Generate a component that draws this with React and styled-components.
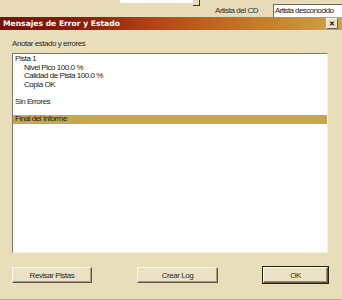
import React from 'react';
import styled, { createGlobalStyle } from 'styled-components';

const GlobalStyle = createGlobalStyle`
  html, body {
    margin: 0;
    padding: 0;
    background: #e8dcb8;
  }
  body {
    font-family: "Liberation Sans", Arial, sans-serif;
    letter-spacing: -0.45px;
    color: #1c1c1c;
    width: 342px;
    height: 300px;
    overflow: hidden;
  }
`;

const lines = [
  { text: 'Pista  1' },
  { text: 'Nivel Pico 100.0 %', indent: true },
  { text: 'Calidad de Pista 100.0 %', indent: true },
  { text: 'Copia OK', indent: true },
  { text: '' },
  { text: 'Sin Errores' },
  { text: '' },
  { text: 'Final del Informe', selected: true }
];

const App = () => (
  <>
    <GlobalStyle />
    <Screen>
      <BackStrip>
        <BackField>
          <DropArrow />
        </BackField>
        <BackLabel>Artista del CD</BackLabel>
        <ArtistField>Artista desconocido</ArtistField>
      </BackStrip>
      <Dialog>
        <TitleBar>
          <Title>Mensajes de Error y Estado</Title>
          <CloseButton>✕</CloseButton>
        </TitleBar>
        <Body>
          <Caption>Anotar estado y errores</Caption>
          <LogBox>
            {lines.map((line, i) => (
              <LogLine key={i} $indent={line.indent} $selected={line.selected}>
                {line.text || '\u00a0'}
              </LogLine>
            ))}
          </LogBox>
          <ButtonRow>
            <Button $width={80}>Revisar Pistas</Button>
            <Button $width={81}>Crear Log</Button>
            <Button $width={65} $default>OK</Button>
          </ButtonRow>
        </Body>
      </Dialog>
    </Screen>
  </>
);

export default App;

const Screen = styled.div`
  width: 342px;
  height: 300px;
  display: flex;
  flex-direction: column;
`;

const BackStrip = styled.div`
  height: 17px;
  display: flex;
  align-items: flex-start;
`;

const BackField = styled.div`
  margin-left: 120px;
  width: 74px;
  height: 3px;
  background: #ffffff;
  position: relative;
`;

const DropArrow = styled.div`
  position: absolute;
  right: -6px;
  top: 0;
  width: 6px;
  height: 5px;
  background: #e8dcb8;
  border-right: 1px solid #3a3528;
  border-bottom: 1px solid #3a3528;
`;

const BackLabel = styled.div`
  width: 58px;
  margin-left: 21px;
  margin-top: 6px;
  font-size: 8px;
  line-height: 10px;
  color: #2a2a2a;
  white-space: nowrap;
`;

const ArtistField = styled.div`
  margin-left: 0;
  margin-top: 4px;
  flex: 1;
  height: 12px;
  background: #ffffff;
  border-top: 1px solid #6e6a5c;
  border-left: 1px solid #6e6a5c;
  padding-left: 1px;
  font-size: 8px;
  letter-spacing: -0.6px;
  line-height: 12px;
  color: #1c1c1c;
  white-space: nowrap;
  overflow: hidden;
`;

const Dialog = styled.div`
  flex: 1;
  display: flex;
  flex-direction: column;
  background: #e9deba;
  border-bottom: 1px solid #b8ab86;
`;

const TitleBar = styled.div`
  height: 13px;
  display: flex;
  align-items: center;
  justify-content: space-between;
  padding: 0 4px 0 3px;
  background: linear-gradient(
    90deg,
    #761206 0%,
    #8e1d0a 25%,
    #b44416 45%,
    #c0641e 62%,
    #c5842c 80%,
    #cfa24a 100%
  );
`;

const Title = styled.div`
  color: #ffffff;
  font-family: "DejaVu Sans", Verdana, sans-serif;
  font-weight: bold;
  font-size: 7.6px;
  letter-spacing: 0;
  line-height: 13px;
  white-space: nowrap;
`;

const CloseButton = styled.div`
  width: 10px;
  height: 9px;
  background: #ece2c6;
  border-top: 1px solid #fffaf0;
  border-left: 1px solid #fffaf0;
  border-right: 1px solid #6a6250;
  border-bottom: 1px solid #6a6250;
  display: flex;
  align-items: center;
  justify-content: center;
  font-size: 7px;
  font-weight: bold;
  line-height: 1;
  letter-spacing: 0;
  color: #111111;
`;

const Body = styled.div`
  flex: 1;
  display: flex;
  flex-direction: column;
  padding: 0 14px 0 12px;
`;

const Caption = styled.div`
  height: 23px;
  padding-top: 9px;
  box-sizing: border-box;
  font-size: 8px;
  line-height: 10px;
  color: #2a2a2a;
  white-space: nowrap;
`;

const LogBox = styled.div`
  height: 200px;
  box-sizing: border-box;
  background: #fefefe;
  border-top: 1px solid #7e7868;
  border-left: 1px solid #7e7868;
  border-right: 1px solid #f6efdc;
  border-bottom: 1px solid #f6efdc;
  padding-top: 1px;
  display: flex;
  flex-direction: column;
`;

const LogLine = styled.div`
  height: 8.6px;
  font-size: 8px;
  line-height: 8.6px;
  padding-left: ${p => (p.$indent ? '11px' : '2px')};
  background: ${p => (p.$selected ? '#c8a64c' : 'transparent')};
  color: #1a1a1a;
  white-space: nowrap;
`;

const ButtonRow = styled.div`
  margin-top: 14px;
  display: flex;
  justify-content: space-between;
  align-items: flex-start;
`;

const Button = styled.div`
  width: ${p => p.$width}px;
  height: 16px;
  box-sizing: border-box;
  background: #ebe1c3;
  border-top: 1px solid #fffbef;
  border-left: 1px solid #fffbef;
  border-right: 1px solid #5e5746;
  border-bottom: 1px solid #5e5746;
  box-shadow: ${p =>
    p.$default
      ? '0 0 0 1px #2a2418, inset -1px -1px 0 #9a8f74'
      : 'inset -1px -1px 0 #a69a7c'};
  display: flex;
  align-items: center;
  justify-content: center;
  font-size: 8px;
  color: #2a2a2a;
`;
